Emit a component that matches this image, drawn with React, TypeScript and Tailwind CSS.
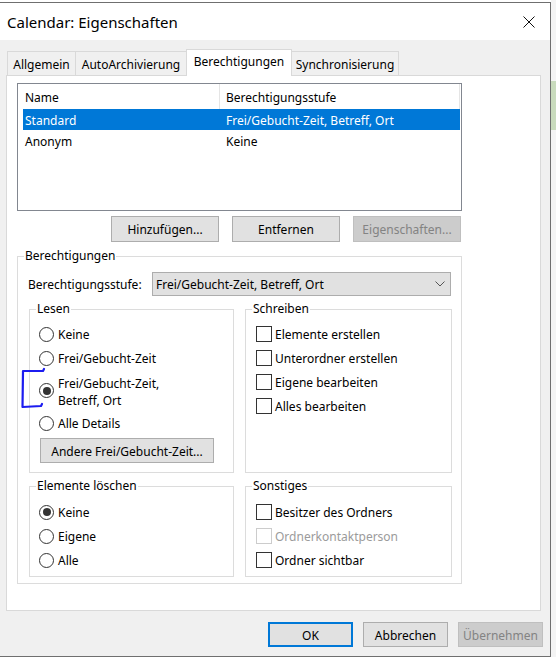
import React from "react";

// Windows-style property dialog: "Calendar: Eigenschaften" / Berechtigungen tab

const Radio = ({ checked = false }: { checked?: boolean }) => (
  <span className="flex h-[15px] w-[15px] shrink-0 items-center justify-center rounded-full border border-[#333333] bg-white">
    {checked && <span className="h-[8px] w-[8px] rounded-full bg-[#333333]" />}
  </span>
);

const Check = ({ disabled = false }: { disabled?: boolean }) => (
  <span
    className={
      disabled
        ? "h-[16px] w-[16px] shrink-0 border border-[#cccccc] bg-white"
        : "h-[16px] w-[16px] shrink-0 border border-[#333333] bg-white"
    }
  />
);

const RadioRow = ({ label, checked }: { label: string; checked?: boolean }) => (
  <div className="flex h-[24px] items-center gap-[4px]">
    <Radio checked={checked} />
    <span className="pt-[2px]">{label}</span>
  </div>
);

const CheckRow = ({ label, disabled }: { label: string; disabled?: boolean }) => (
  <div className="flex h-[24px] items-center gap-[3px]">
    <Check disabled={disabled} />
    <span className={disabled ? "pt-[2px] text-[#9b9b9b]" : "pt-[2px]"}>{label}</span>
  </div>
);

interface GroupProps {
  title: string;
  className?: string;
  children: React.ReactNode;
}

const Group: React.FC<GroupProps> = ({ title, className = "", children }) => (
  <fieldset className={`border border-[#dcdcdc] ${className}`}>
    <legend className="ml-[6px] px-[1px] leading-[16px]">{title}</legend>
    {children}
  </fieldset>
);

const Button = ({
  label,
  className = "",
  disabled = false,
}: {
  label: string;
  className?: string;
  disabled?: boolean;
}) => (
  <div
    className={
      disabled
        ? `flex items-center justify-center border border-[#bfbfbf] bg-[#cccccc] pt-[2px] text-[#838383] ${className}`
        : `flex items-center justify-center border border-[#adadad] bg-[#e1e1e1] pt-[2px] ${className}`
    }
  >
    {label}
  </div>
);

export default function App() {
  return (
    <div className="relative flex h-[657px] w-[556px] overflow-hidden bg-white font-['Noto_Sans',sans-serif] text-[12px] leading-[16px] text-black">
      {/* dialog window */}
      <div className="mt-[2px] flex h-[655px] w-[551px] flex-col border-t border-r border-b border-[#6f6f6f]">
        {/* title bar */}
        <div className="flex h-[37px] items-center justify-between bg-white pl-[7px] pr-[15px]">
          <span className="text-[15px] leading-[20px]">Calendar: Eigenschaften</span>
          <svg width="12" height="12" viewBox="0 0 12 12">
            <path d="M0.5 0.5 L11.5 11.5 M11.5 0.5 L0.5 11.5" stroke="#111" strokeWidth="1" />
          </svg>
        </div>

        <div className="flex flex-1 flex-col bg-[#f0f0f0] pl-[6px] pr-[7px]">
          {/* tabs */}
          <div className="mt-[9px] flex h-[26px] items-end pl-[1px]">
            <div className="flex h-[24px] w-[68px] items-center justify-center border-t border-l border-[#d9d9d9] pt-[2px]">
              Allgemein
            </div>
            <div className="flex h-[24px] w-[111px] items-center justify-center border-t border-l border-[#d9d9d9] pt-[2px]">
              AutoArchivierung
            </div>
            <div className="relative z-10 -mb-[1px] flex h-[27px] w-[106px] items-center justify-center border-t border-l border-r border-[#d9d9d9] bg-white pb-[2px]">
              Berechtigungen
            </div>
            <div className="flex h-[24px] w-[107px] items-center justify-center border-t border-r border-[#d9d9d9] pt-[2px]">
              Synchronisierung
            </div>
          </div>

          {/* tab page */}
          <div className="h-[536px] w-[535px] border border-[#d9d9d9] bg-white pl-[10px] pt-[7px]">
            {/* user list */}
            <div className="h-[128px] w-[445px] border border-[#828790] bg-white">
              <div className="flex h-[25px] items-center">
                <div className="w-[201px] pl-[7px] pt-[2px]">Name</div>
                <div className="h-[25px] w-px bg-[#e5e5e5]" />
                <div className="w-[239px] pl-[6px] pt-[2px]">Berechtigungsstufe</div>
                <div className="h-[25px] w-px bg-[#e5e5e5]" />
              </div>
              <div className="ml-[5px] flex h-[21px] w-[437px] items-center bg-[#0078d7] pt-[2px] text-white">
                <div className="w-[201px] pl-[2px]">Standard</div>
                <div className="pl-[2px]">Frei/Gebucht-Zeit, Betreff, Ort</div>
              </div>
              <div className="ml-[5px] flex h-[21px] w-[437px] items-center pt-[2px]">
                <div className="w-[201px] pl-[2px]">Anonym</div>
                <div className="pl-[2px]">Keine</div>
              </div>
            </div>

            <div className="mt-[5px] flex w-[445px] justify-end gap-[13px] pr-[1px]">
              <Button label="Hinzufügen..." className="h-[26px] w-[108px]" />
              <Button label="Entfernen" className="h-[26px] w-[108px]" />
              <Button label="Eigenschaften..." className="h-[26px] w-[108px]" disabled />
            </div>

            {/* permissions */}
            <Group title="Berechtigungen" className="mt-[6px] w-[445px] pb-[6px]">
              <div className="mt-[8px] flex items-center pl-[10px]">
                <span className="w-[124px] pt-[2px]">Berechtigungsstufe:</span>
                <div className="flex h-[24px] w-[299px] items-center justify-between border border-[#adadad] bg-[#e1e1e1] pl-[3px] pr-[5px]">
                  <span className="pt-[2px]">Frei/Gebucht-Zeit, Betreff, Ort</span>
                  <svg width="10" height="6" viewBox="0 0 10 6">
                    <path d="M0.5 0.5 L5 5 L9.5 0.5" fill="none" stroke="#555" strokeWidth="1" />
                  </svg>
                </div>
              </div>

              <div className="mt-[5px] flex gap-[11px] pl-[11px]">
                <Group title="Lesen" className="h-[172px] w-[205px]">
                  <div className="pl-[9px] pt-[5px]">
                    <RadioRow label="Keine" />
                    <RadioRow label="Frei/Gebucht-Zeit" />
                    <div className="flex h-[41px] items-center gap-[4px]">
                      <Radio checked />
                      <span className="pt-[2px] leading-[17px]">
                        Frei/Gebucht-Zeit,
                        <br />
                        Betreff, Ort
                      </span>
                    </div>
                    <RadioRow label="Alle Details" />
                    <Button label="Andere Frei/Gebucht-Zeit..." className="ml-[1px] mt-[3px] h-[25px] w-[174px]" />
                  </div>
                </Group>
                <Group title="Schreiben" className="h-[172px] w-[207px]">
                  <div className="pl-[10px] pt-[5px]">
                    <CheckRow label="Elemente erstellen" />
                    <CheckRow label="Unterordner erstellen" />
                    <CheckRow label="Eigene bearbeiten" />
                    <CheckRow label="Alles bearbeiten" />
                  </div>
                </Group>
              </div>

              <div className="mt-[5px] flex gap-[11px] pl-[11px]">
                <Group title="Elemente löschen" className="h-[99px] w-[205px]">
                  <div className="pl-[9px] pt-[6px]">
                    <RadioRow label="Keine" checked />
                    <RadioRow label="Eigene" />
                    <RadioRow label="Alle" />
                  </div>
                </Group>
                <Group title="Sonstiges" className="h-[99px] w-[207px]">
                  <div className="pl-[10px] pt-[6px]">
                    <CheckRow label="Besitzer des Ordners" />
                    <CheckRow label="Ordnerkontaktperson" disabled />
                    <CheckRow label="Ordner sichtbar" />
                  </div>
                </Group>
              </div>
            </Group>
          </div>

          {/* dialog buttons */}
          <div className="mt-[11px] flex justify-end gap-[10px]">
            <Button label="OK" className="h-[25px] w-[85px] !border-2 !border-[#0078d7]" />
            <Button label="Abbrechen" className="h-[25px] w-[85px]" />
            <Button label="Übernehmen" className="h-[25px] w-[85px]" disabled />
          </div>
        </div>
      </div>

      {/* sliver of the window behind */}
      <div className="flex w-[5px] flex-col bg-[#f4f4f4]">
        <div className="h-[81px]" />
        <div className="h-[49px] bg-[#c9dbbd]" />
      </div>

      {/* hand-drawn blue marker */}
      <svg className="pointer-events-none absolute left-[18px] top-[366px]" width="30" height="46" viewBox="0 0 30 46">
        <path
          d="M26 3 L25 5 L5 5 L4.5 41 L23 40 L24 38"
          fill="none"
          stroke="#1c1cf0"
          strokeWidth="2.2"
          strokeLinecap="round"
          strokeLinejoin="round"
        />
      </svg>
    </div>
  );
}
